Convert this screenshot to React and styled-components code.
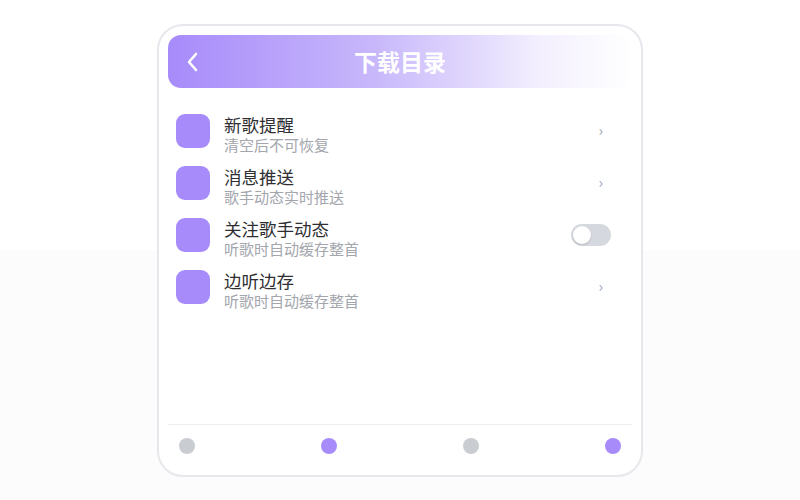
import React from "react";
import styled, { createGlobalStyle } from "styled-components";

const Global = createGlobalStyle`
  html, body { margin: 0; padding: 0; }
  html {
    background: linear-gradient(to bottom, #ffffff 0, #ffffff 250px, #fcfcfd 250px, #fcfcfd 100%);
    min-height: 100%;
  }
  body {
    font-family: "Noto Sans CJK SC", "Noto Sans", sans-serif;
    height: 500px;
  }
`;

const Page = styled.div`
  display: flex;
  justify-content: center;
  padding-top: 24px;
`;

const Card = styled.div`
  width: 486px;
  height: 453px;
  box-sizing: border-box;
  border: 2px solid #e7e7ec;
  border-radius: 26px;
  background: #fff;
  padding: 9px;
  display: flex;
  flex-direction: column;
`;

const Header = styled.div`
  height: 53px;
  border-radius: 13px;
  background: linear-gradient(90deg, #a78bfa 0%, #c8b8fb 45%, #f3effe 80%, #ffffff 100%);
  display: flex;
  align-items: center;
  position: relative;
  flex-shrink: 0;
`;

const Back = styled.button`
  border: 0;
  background: none;
  padding: 0;
  margin-left: 14px;
  width: 22px;
  height: 22px;
  display: flex;
  align-items: center;
  justify-content: center;
  cursor: pointer;
`;

const Title = styled.h1`
  position: absolute;
  left: 0;
  right: 0;
  margin: 0;
  text-align: center;
  color: #fff;
  font-size: 23px;
  font-weight: 700;
  line-height: 53px;
  pointer-events: none;
`;

const List = styled.div`
  flex: 1;
  padding: 17px 21px 0 8px;
  display: flex;
  flex-direction: column;
`;

const Row = styled.div`
  height: 52px;
  display: flex;
  align-items: center;
`;

const Icon = styled.div`
  width: 34px;
  height: 34px;
  border-radius: 9px;
  background: #a78bfa;
  flex-shrink: 0;
`;

const Texts = styled.div`
  flex: 1;
  margin-left: 14px;
  display: flex;
  flex-direction: column;
  margin-top: 5px;
`;

const ItemTitle = styled.div`
  font-size: 17.5px;
  line-height: 21px;
  color: #2f2f33;
`;

const ItemSub = styled.div`
  font-size: 15px;
  line-height: 19px;
  color: #a3a6ad;
`;

const Chevron = styled.span`
  font-size: 15px;
  color: #9ca3af;
  margin-right: 8px;
  margin-top: -4px;
`;

const Toggle = styled.div`
  width: 40px;
  height: 22px;
  border-radius: 11px;
  background: #d5d8de;
  position: relative;
`;

const Knob = styled.div`
  position: absolute;
  left: 2px;
  top: 2px;
  width: 18px;
  height: 18px;
  border-radius: 50%;
  background: #fff;
  box-shadow: 0 1px 2px rgba(0, 0, 0, 0.15);
`;

const Footer = styled.div`
  border-top: 1px solid #eeeef1;
  height: 41px;
  padding: 0 11px;
  display: flex;
  align-items: center;
  justify-content: space-between;
  flex-shrink: 0;
`;

const Dot = styled.div`
  width: 16px;
  height: 16px;
  border-radius: 50%;
  background: ${(p) => (p.$active ? "#a78bfa" : "#c9ccd1")};
`;

const items = [
  { title: "新歌提醒", sub: "清空后不可恢复", type: "chevron" },
  { title: "消息推送", sub: "歌手动态实时推送", type: "chevron" },
  { title: "关注歌手动态", sub: "听歌时自动缓存整首", type: "toggle" },
  { title: "边听边存", sub: "听歌时自动缓存整首", type: "chevron" },
];

export default function App() {
  return (
    <>
      <Global />
      <Page>
        <Card>
          <Header>
            <Back aria-label="返回">
              <svg width="14" height="20" viewBox="0 0 14 20" fill="none">
                <path d="M10 2 L3 10 L10 18" stroke="#fff" strokeWidth="2.6" strokeLinecap="round" strokeLinejoin="round" />
              </svg>
            </Back>
            <Title>下载目录</Title>
          </Header>
          <List>
            {items.map((it) => (
              <Row key={it.title}>
                <Icon />
                <Texts>
                  <ItemTitle>{it.title}</ItemTitle>
                  <ItemSub>{it.sub}</ItemSub>
                </Texts>
                {it.type === "toggle" ? (
                  <Toggle>
                    <Knob />
                  </Toggle>
                ) : (
                  <Chevron>›</Chevron>
                )}
              </Row>
            ))}
          </List>
          <Footer>
            <Dot />
            <Dot $active />
            <Dot />
            <Dot $active />
          </Footer>
        </Card>
      </Page>
    </>
  );
}
